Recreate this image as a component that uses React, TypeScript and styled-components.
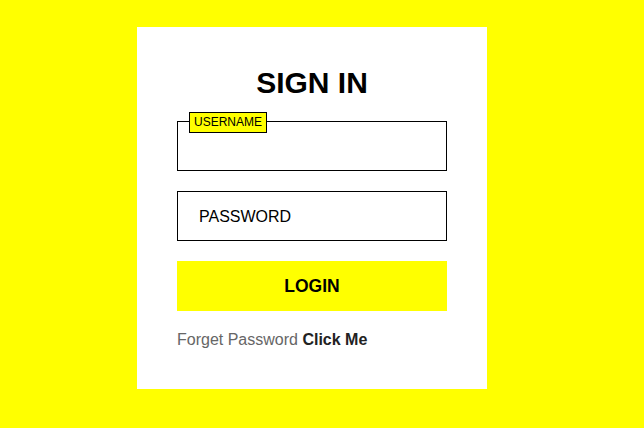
import React, { useState } from 'react'
import styled, { createGlobalStyle } from 'styled-components';

const GlobalStyle = createGlobalStyle`
    html, body {
        margin: 0;
        padding: 0;
        background-color: #FFFF00;
        font-family: "Liberation Sans", Arial, sans-serif;
    }
    * {
        box-sizing: border-box;
    }
`;

const Page = styled.div`
    width: 644px;
    height: 428px;
    padding: 27px 0 0 137px;
    background-color: #FFFF00;
`;

const Card = styled.div`
    width: 350px;
    height: 362px;
    background-color: #FFF;
    padding: 39px 40px 0 40px;
    display: flex;
    flex-direction: column;
`;

const Title = styled.h2`
    margin: 0 0 22px 0;
    font-size: 30px;
    line-height: 33px;
    font-weight: 700;
    text-align: center;
    color: #000;
`;

const Form = styled.form`
    display: flex;
    flex-direction: column;
    gap: 20px;
`;

const Field = styled.div`
    position: relative;
    width: 270px;
    height: 50px;
`;

const Input = styled.input`
    width: 100%;
    height: 100%;
    border: 1px solid #000;
    padding: 1px 21px 0 21px;
    font-family: "Liberation Sans", Arial, sans-serif;
    font-size: 16px;
    color: #000;
    outline: none;
    &::placeholder {
        color: #000;
    }
`;

const FloatLabel = styled.span`
    position: absolute;
    top: -9px;
    left: 12px;
    height: 21px;
    padding: 0 4px;
    line-height: 19px;
    font-size: 12px;
    color: #000;
    background-color: #FFFF00;
    border: 1px solid #000;
`;

const Submit = styled.button`
    width: 270px;
    height: 50px;
    border: 0;
    background-color: #FFFF00;
    color: #000;
    font-family: "Liberation Sans", Arial, sans-serif;
    font-size: 17.5px;
    font-weight: 700;
    cursor: pointer;
`;

const Footer = styled.p`
    margin: 20px 0 0 0;
    font-size: 16px;
    line-height: 18px;
    color: #666;
`;

const FooterLink = styled.a`
    font-weight: 700;
    color: #222;
    text-decoration: none;
`;

const App = () => {
    const [username, setUsername] = useState("");
    const [password, setPassword] = useState("");

    return (
        <Page>
            <GlobalStyle />
            <Card>
                <Title>SIGN IN</Title>
                <Form onSubmit={(e) => e.preventDefault()}>
                    <Field>
                        <Input type="text" value={username} onChange={e => setUsername(e.target.value)} />
                        <FloatLabel>USERNAME</FloatLabel>
                    </Field>
                    <Field>
                        <Input type="password" placeholder="PASSWORD" value={password} onChange={e => setPassword(e.target.value)} />
                    </Field>
                    <Submit type="submit">LOGIN</Submit>
                </Form>
                <Footer>
                    Forget Password <FooterLink href="#">Click Me</FooterLink>
                </Footer>
            </Card>
        </Page>
    )
}

export default App;
